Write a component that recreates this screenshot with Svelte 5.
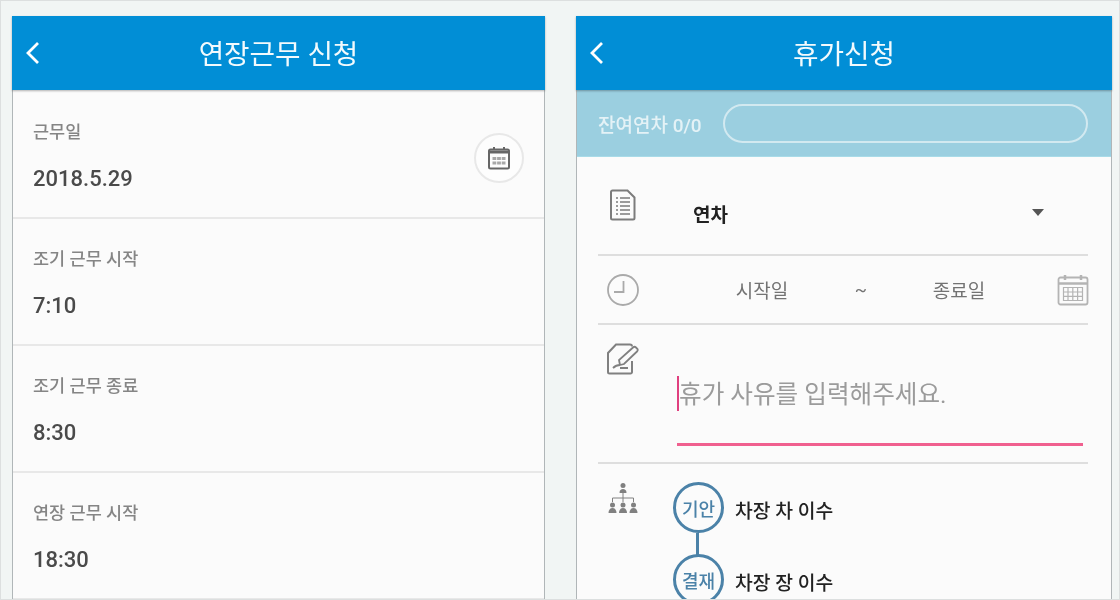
<script>
	const fields = [
		{ label: '근무일', value: '2018.5.29', picker: true },
		{ label: '조기 근무 시작', value: '7:10' },
		{ label: '조기 근무 종료', value: '8:30' },
		{ label: '연장 근무 시작', value: '18:30' }
	]
	const approvers = [
		{ type: '기안', name: '차장 차 이수' },
		{ type: '결재', name: '차장 장 이수' }
	]
</script>

<div class="page">
	<section class="phone left">
		<header>
			<svg class="back" viewBox="0 0 16 24"><path d="M13 2 3 12l10 10" /></svg>
			<h1>연장근무 신청</h1>
		</header>
		{#each fields as f}
			<div class="field">
				<div>
					<div class="label">{f.label}</div>
					<div class="value">{f.value}</div>
				</div>
				{#if f.picker}
					<div class="picker">
						<svg viewBox="0 0 24 24" width="24" height="24" fill="none" stroke="#666">
							<rect x="2" y="3.500" width="20" height="19" rx="1.500" stroke-width="2" />
							<path d="M2 6h20" stroke-width="3" />
							<path d="M7 1v3M17 1v3" stroke-width="2" />
							<path d="M5.500 12.500h13M5.500 17h13" stroke-width="3" stroke="#a8a8a8" stroke-dasharray="3.800 .8" />
						</svg>
					</div>
				{/if}
			</div>
		{/each}
	</section>

	<section class="phone right">
		<header>
			<svg class="back" viewBox="0 0 16 24"><path d="M13 2 3 12l10 10" /></svg>
			<h1>휴가신청</h1>
		</header>
		<div class="balance">
			<span>잔여연차 0/0</span>
			<div class="pill"></div>
		</div>
		<div class="form">
			<div class="row type">
				<svg class="doc" viewBox="0 0 26 32" fill="none" stroke="#7c7c7c" stroke-width="2">
					<path d="M2.500 1.500h15l7 7v20.500a1.500 1.500 0 0 1-1.500 1.500h-20.500a1.500 1.500 0 0 1-1.500-1.500V3a1.500 1.500 0 0 1 1.500-1.500z" />
					<path d="M6 9h2M10 9h10M6 13h2M10 13h10M6 17h2M10 17h10M6 21h2M10 21h10M6 25h2M10 25h10" stroke-width="1.600" />
				</svg>
				<strong>연차</strong>
				<i class="caret"></i>
			</div>
			<div class="row dates">
				<svg class="ico" viewBox="0 0 32 32" fill="none" stroke="#aaa" stroke-width="1.800">
					<circle cx="16" cy="16" r="15" />
					<path d="M16.500 7v11H7" />
				</svg>
				<span>시작일</span>
				<span class="tilde">~</span>
				<span>종료일</span>
				<svg class="cal" viewBox="0 0 32 32" fill="none" stroke="#b4b4b4" stroke-width="1.800">
					<rect x="1.500" y="3.500" width="29" height="27" rx="2" />
					<path d="M1.500 9.500h29" stroke-width="2.500" />
					<path d="M8 1v5M24 1v5" stroke-width="2.500" />
					<path d="M6.500 13.500h19v13h-19zM6.500 18h19M6.500 22.300h19M11 13.500v13M15.800 13.500v13M20.600 13.500v13" stroke-width="1.200" />
				</svg>
			</div>
			<div class="row memo">
				<svg class="ico" viewBox="0 0 32 32" fill="none" stroke="#808080" stroke-width="2">
					<path d="M25 18v11a1.500 1.500 0 0 1-1.500 1.500h-21A1.500 1.500 0 0 1 1 29V10l8-8.500h14a2 2 0 0 1 2 2" />
					<path d="M13 22 12 17 26 4.500c1-1 2-1 3 0l1.500 1.500c.5 1 .5 1.500-.5 2.500L17 21z" stroke-width="1.800" />
					<path d="M6 25c2-2 4-3 7-3M13 25h8" stroke-width="1.800" />
				</svg>
				<div class="input"><span class="cursor"></span>휴가 사유를 입력해주세요.</div>
			</div>
			<div class="row line">
				<svg class="org" viewBox="0 0 30 32" fill="#808080">
					<circle cx="15" cy="3.500" r="2.500" />
					<path d="M11.500 11c0-3 1.500-4 3.500-4s3.500 1 3.500 4z" />
					<path d="M15 11v5M4.500 20v-4h21v4M15 16v4" fill="none" stroke="#808080" stroke-width="1" />
					{#each [4.5, 15, 25.5] as x}
						<circle cx={x} cy="23" r="2.500" />
						<path d="M{x - 4} 31c0-3 1.500-5 4-5s4 2 4 5z" />
					{/each}
				</svg>
				<div class="chain">
					{#each approvers as a}
						<div class="step">
							<div class="dot">{a.type}</div>
							<div class="name">{a.name}</div>
						</div>
					{/each}
				</div>
			</div>
		</div>
	</section>
</div>

<style>
	:global(body) {
		overflow: hidden;
		background: #f1f5f4;
	}
	.page {
		box-sizing: border-box;
		height: 600px;
		overflow: hidden;
		display: flex;
		gap: 31px;
		padding: 15px 0 0 11px;
		background: #f1f5f4;
		border: 1px solid #dcdfdf;
		font-family: Roboto, 'Noto Sans CJK KR', sans-serif;
		filter: blur(0.6px);
	}
	.phone {
		box-sizing: border-box;
		height: 640px;
		background: #fbfbfb;
		border: 1px solid #b0b6b8;
		border-top: 0;
	}
	.left {
		width: 533px;
	}
	.right {
		width: 536px;
	}
	header {
		height: 74px;
		margin: 0 -1px;
		position: relative;
		display: flex;
		align-items: center;
		justify-content: center;
		background: #018ed6;
		box-shadow: 0 1px 2px rgba(0, 0, 0, 0.3);
	}
	h1 {
		margin: 0 0 2px;
		font-size: 27.700px;
		font-weight: 400;
		color: #f2fafd;
	}
	.back {
		position: absolute;
		left: 13px;
		top: 25px;
		width: 16px;
		height: 24px;
		fill: none;
		stroke: #fff;
		stroke-width: 2.800;
	}
	.field {
		box-sizing: border-box;
		height: 127px;
		padding: 28px 20px 0;
		display: flex;
		justify-content: space-between;
		border-bottom: 2px solid #e8e8e8;
	}
	header + .field {
		height: 129px;
		padding-top: 30px;
	}
	.label {
		font-size: 17.500px;
		font-weight: 500;
		line-height: 24px;
		color: #858585;
	}
	.value {
		margin-top: 22px;
		font-size: 22px;
		font-weight: 500;
		line-height: 26px;
		color: #4a4a4a;
	}
	.picker {
		width: 46px;
		height: 46px;
		margin-top: 13px;
		display: flex;
		align-items: center;
		justify-content: center;
		border: 2px solid #e8e8e8;
		border-radius: 50%;
		background: #fdfdfd;
	}
	.balance {
		height: 67px;
		box-sizing: border-box;
		padding: 0 23px 0 21px;
		display: flex;
		align-items: center;
		gap: 21px;
		background: #9bcfe0;
		border-bottom: 1px solid #a8dbe8;
		color: #e4f2f6;
		font-size: 19px;
		font-weight: 500;
	}
	.pill {
		flex: 1;
		height: 39px;
		box-sizing: border-box;
		border: 2px solid #d2e9f0;
		border-radius: 20px;
	}
	.form {
		margin: 0 23px 0 21px;
	}
	.row {
		position: relative;
		display: flex;
		border-bottom: 2px solid #dedede;
		box-sizing: border-box;
	}
	.type {
		height: 99px;
		align-items: center;
		padding-left: 95px;
	}
	.type strong {
		font-size: 19px;
		font-weight: 700;
		color: #222;
		margin-top: 16px;
		flex: 1;
	}
	.doc {
		position: absolute;
		left: 12px;
		top: 32px;
		width: 26px;
		height: 32px;
	}
	.caret {
		width: 0;
		height: 0;
		margin: 14px 44px 0 0;
		border: 6px solid transparent;
		border-top: 7px solid #555;
		border-bottom: 0;
	}
	.dates {
		height: 69px;
		align-items: center;
		justify-content: space-between;
		padding: 0 0 0 9px;
		font-size: 19px;
		color: #737373;
	}
	.ico {
		width: 32px;
		height: 32px;
		flex: none;
	}
	.dates span:nth-of-type(1) {
		margin-left: 96px;
	}
	.tilde {
		margin-left: 66px;
		font-size: 18px;
	}
	.dates span:nth-of-type(3) {
		margin-left: 65px;
	}
	.cal {
		width: 32px;
		height: 32px;
		margin-left: 71px;
		margin-right: -1px;
	}
	.memo {
		height: 139px;
		padding: 18px 0 0 9px;
		gap: 38px;
	}
	.input {
		position: relative;
		box-sizing: border-box;
		flex: 1;
		height: 103px;
		margin: 0 5px 0 0;
		padding: 34px 0 0 2px;
		border-bottom: 3px solid #f0608f;
		font-size: 24.600px;
		line-height: 36px;
		color: #9b9b9b;
	}
	.cursor {
		position: absolute;
		left: 0;
		top: 33px;
		width: 2px;
		height: 35px;
		background: #e0407f;
	}
	.line {
		border: 0;
		padding: 18px 0 0 10px;
		gap: 35px;
	}
	.org {
		width: 30px;
		height: 32px;
		flex: none;
	}
	.chain {
		margin-top: 0;
	}
	.step {
		display: flex;
		gap: 11px;
		height: 72px;
		align-items: flex-start;
	}
	.dot {
		position: relative;
		box-sizing: border-box;
		width: 51px;
		height: 51px;
		display: flex;
		align-items: center;
		justify-content: center;
		border: 3px solid #4b82a8;
		border-radius: 50%;
		color: #4b82a8;
		font-size: 18px;
		font-weight: 500;
	}
	.step:first-child .dot::after {
		content: '';
		position: absolute;
		left: 20px;
		top: 48px;
		width: 3px;
		height: 24px;
		background: #4b82a8;
	}
	.name {
		margin-top: 14px;
		font-size: 19.300px;
		font-weight: 500;
		color: #222;
	}
</style>
